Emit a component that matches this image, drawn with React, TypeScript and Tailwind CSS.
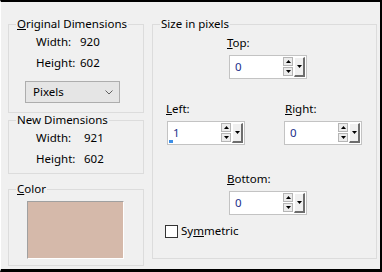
import React from "react";

const font = { fontFamily: '"Noto Sans", "Open Sans", Arial, sans-serif' };

function Group({
  label,
  className,
  children,
}: {
  label: React.ReactNode;
  className: string;
  children?: React.ReactNode;
}) {
  return (
    <div className={`relative border border-[#dcdcdc] ${className}`}>
      <span className="absolute -top-[8px] left-[7px] bg-[#f0f0f0] px-[1px] text-[11.5px] leading-[14px] text-black whitespace-nowrap">
        {label}
      </span>
      {children}
    </div>
  );
}

function Row({ label, value, valueLeft }: { label: string; value: string; valueLeft: string }) {
  return (
    <div className="flex h-[20px] items-center text-[11.5px] leading-[14px] text-black">
      <span className={valueLeft}>{label}</span>
      <span>{value}</span>
    </div>
  );
}

function Tri({ up }: { up?: boolean }) {
  return (
    <svg width="5" height="3" viewBox="0 0 5 3" className="block">
      {up ? <polygon points="0,3 5,3 2.5,0" fill="#000" /> : <polygon points="0,0 5,0 2.5,3" fill="#000" />}
    </svg>
  );
}

function Spin({ value, indicator }: { value: string; indicator?: boolean }) {
  return (
    <div className="relative flex h-[24px] w-[78px] items-center border border-[#c3c3c3] bg-white">
      <span className="flex-1 pl-[5px] text-[11.5px] leading-[14px] text-[#1a2f8a]">{value}</span>
      <div className="flex h-[20px] w-[10px] flex-col gap-[1px]">
        <div className="flex h-[9px] items-center justify-center border border-[#b5b5b5] bg-[#ececec]">
          <Tri up />
        </div>
        <div className="flex h-[9px] items-center justify-center border border-[#b5b5b5] bg-[#ececec]">
          <Tri />
        </div>
      </div>
      <div className="ml-[1px] mr-[1px] flex h-[20px] w-[11px] items-center justify-center border-t border-l border-b-2 border-r-2 border-t-white border-l-white border-b-[#6d6d6d] border-r-[#6d6d6d] bg-[#f0f0f0]">
        <Tri />
      </div>
      {indicator && <div className="absolute left-[1px] top-[18px] h-[3px] w-[4px] bg-[#3c8ee6]" />}
    </div>
  );
}

export default function App() {
  return (
    <div
      style={font}
      className="flex h-[272px] w-[382px] border-t-2 border-r-2 border-b-[3px] border-l border-t-black border-r-black border-b-black border-l-white bg-[#f0f0f0] pl-[7px] pt-[22px]"
    >
      <div className="flex w-[136px] flex-col">
        <Group
          className="h-[89px]"
          label={
            <>
              <span className="underline">O</span>riginal Dimensions
            </>
          }
        >
          <div className="flex flex-col gap-[1px] pl-[27px] pt-[7px]">
            <Row label="Width:" value="920" valueLeft="w-[44px]" />
            <Row label="Height:" value="602" valueLeft="w-[44px]" />
          </div>
          <div className="ml-[16px] mt-[8px] flex h-[22px] w-[95px] items-center justify-between border border-[#adadad] bg-[#e5e5e5] pl-[7px] pr-[6px] text-[11.5px] leading-[14px] text-black">
            <span>Pixels</span>
            <svg width="8" height="5" viewBox="0 0 8 5">
              <polyline points="0.5,0.5 4,4 7.5,0.5" fill="none" stroke="#606060" strokeWidth="1" />
            </svg>
          </div>
        </Group>
        <Group className="mt-[7px] h-[54px]" label="New Dimensions">
          <div className="flex flex-col gap-[1px] pl-[27px] pt-[7px]">
            <Row label="Width:" value="921" valueLeft="w-[48px]" />
            <Row label="Height:" value="602" valueLeft="w-[48px]" />
          </div>
        </Group>
        <Group
          className="mt-[15px] h-[77px]"
          label={
            <>
              <span className="underline">C</span>olor
            </>
          }
        >
          <div className="ml-[18px] mt-[11px] h-[58px] w-[97px] border-t border-l border-b border-r border-t-[#a0a0a0] border-l-[#a0a0a0] border-b-white border-r-white bg-[#d5b9aa]" />
        </Group>
      </div>

      <Group className="ml-[8px] h-[235px] w-[225px]" label="Size in pixels">
        <div className="flex flex-col pl-[74px] pt-[11px]">
          <span className="text-[11.5px] leading-[14px] text-black">
            <span className="underline">T</span>op:
          </span>
          <div className="ml-[2px] mt-[5px]">
            <Spin value="0" />
          </div>
        </div>
        <div className="mt-[23px] flex pl-[13px]">
          <div className="flex flex-col">
            <span className="text-[11.5px] leading-[14px] text-black">
              <span className="underline">L</span>eft:
            </span>
            <div className="ml-[1px] mt-[5px]">
              <Spin value="1" indicator />
            </div>
          </div>
          <div className="ml-[39px] flex flex-col">
            <span className="pl-[1px] text-[11.5px] leading-[14px] text-black">
              <span className="underline">R</span>ight:
            </span>
            <div className="mt-[5px]">
              <Spin value="0" />
            </div>
          </div>
        </div>
        <div className="mt-[27px] flex flex-col pl-[74px]">
          <span className="text-[11.5px] leading-[14px] text-black">
            <span className="underline">B</span>ottom:
          </span>
          <div className="ml-[2px] mt-[5px]">
            <Spin value="0" />
          </div>
        </div>
        <div className="mt-[9px] flex items-center pl-[12px]">
          <div className="h-[13px] w-[13px] border border-[#333333] bg-white" />
          <span className="ml-[3px] text-[11.5px] leading-[14px] text-black">
            Sy<span className="underline">m</span>metric
          </span>
        </div>
      </Group>
    </div>
  );
}
